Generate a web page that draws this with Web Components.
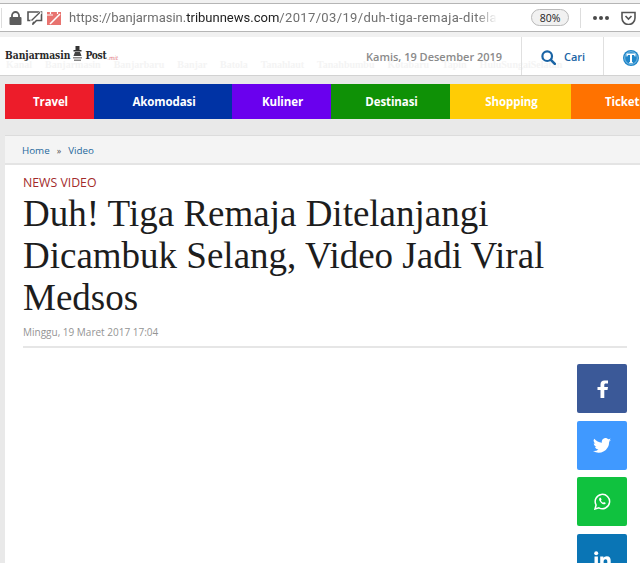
<!DOCTYPE html>
<html>
<head>
<meta charset="utf-8">
<title>Duh! Tiga Remaja Ditelanjangi</title>
<style>
    html, body { margin: 0; padding: 0; }
    body {
        width: 640px;
        height: 563px;
        overflow: hidden;
        background: #e9e9e9;
        font-family: "Open Sans", sans-serif;
    }
</style>
</head>
<body>
<browser-bar></browser-bar>
<site-header></site-header>
<nav-strip>
    <nav-item color="#ed1c2a" width="89">Travel</nav-item>
    <nav-item color="#0033a5" width="138">Akomodasi</nav-item>
    <nav-item color="#6a00ee" width="99">Kuliner</nav-item>
    <nav-item color="#0f9106" width="119">Destinasi</nav-item>
    <nav-item color="#ffcc05" width="121">Shopping</nav-item>
    <nav-item color="#ff7200" width="69" class="last">Ticketi</nav-item>
</nav-strip>
<article-card>
    <span slot="channel">NEWS VIDEO</span>
    <span slot="title">Duh! Tiga Remaja Ditelanjangi Dicambuk Selang, Video Jadi Viral Medsos</span>
    <span slot="date">Minggu, 19 Maret 2017 17:04</span>
</article-card>

<script>
class BrowserBar extends HTMLElement {
    constructor() {
        super();
        this.attachShadow({ mode: 'open' });
        this.shadowRoot.innerHTML = `
            <style>
                :host {
                    display: block;
                    height: 37px;
                    padding-top: 3px;
                    box-sizing: border-box;
                    background: #f1f1f1;
                }
                #bar {
                    height: 29px;
                    box-sizing: border-box;
                    background: #fff;
                    border-top: 1px solid #b5b5b5;
                    border-bottom: 1px solid #b5b5b5;
                    display: flex;
                    align-items: center;
                    font-family: Roboto, sans-serif;
                }
                #edge { width: 1px; height: 20px; background: #ddd; margin-left: 1px; }
                #icons { display: flex; align-items: center; gap: 5px; padding-left: 7px; }
                #bubble { margin-right: -1px; }
                #url {
                    margin-left: 8px;
                    width: 428px;
                    overflow: hidden;
                    white-space: nowrap;
                    font-size: 13px;
                    color: #6f6f6f;
                    -webkit-mask-image: linear-gradient(to right, #000 95%, transparent 100%);
                    mask-image: linear-gradient(to right, #000 95%, transparent 100%);
                }
                #url b { font-weight: 400; color: #222; }
                #url span { letter-spacing: 0.35px; }
                #zoom {
                    margin-left: 34px;
                    width: 38px;
                    height: 17px;
                    box-sizing: border-box;
                    border: 1px solid #b9b9b9;
                    border-radius: 9px;
                    background: #f1f1f1;
                    font-family: "Open Sans", sans-serif;
                    font-size: 10.5px;
                    color: #222;
                    display: flex;
                    align-items: center;
                    justify-content: center;
                }
                #sep { width: 1px; height: 20px; background: #ddd; margin-left: 11px; }
                #dots { display: flex; gap: 2px; margin-left: 12px; }
                #dots i { width: 4px; height: 4px; border-radius: 50%; background: #4a4a4a; }
                #pocket { margin-left: 12px; display: block; }
            </style>
            <div id="bar">
                <div id="edge"></div>
                <div id="icons">
                    <svg width="13" height="14" viewBox="0 0 13 14"><path d="M3 6V4.500a3.500 3.500 0 0 1 7 0V6" fill="none" stroke="#5c5c5c" stroke-width="1.800"/><rect x="0.500" y="6" width="12" height="8" rx="1" fill="#5c5c5c"/></svg>
                    <svg id="bubble" width="16" height="14" viewBox="0 0 16 14"><path d="M1 1h13.500v8.500H9.500L6 13V9.500H1z" fill="#fff" stroke="#555" stroke-width="1.600"/><path d="M4 11L14 1" stroke="#fff" stroke-width="3"/><path d="M4.500 9.500L13 1.200" stroke="#555" stroke-width="1.300"/></svg>
                    <svg width="14" height="14" viewBox="0 0 14 14"><path d="M0 1h14v13H0z" fill="#e8736f"/><path d="M3 13L13 3" stroke="#fff" stroke-width="1.600"/><path d="M0 4h6" stroke="#fff" stroke-width="1"/><path d="M3.500 0v3M10.500 0v3" stroke="#fff" stroke-width="1.200"/></svg>
                </div>
                <div id="url">https://banjarmasin.<b>tribunnews.com</b><span>/2017/03/19/duh-tiga-remaja-ditela</span></div>
                <div id="zoom">80%</div>
                <div id="sep"></div>
                <div id="dots"><i></i><i></i><i></i></div>
                <svg id="pocket" width="15" height="14" viewBox="0 0 15 14"><path d="M1 1.500h13v5.500a6.500 6.500 0 0 1-13 0z" fill="none" stroke="#555" stroke-width="1.600"/><path d="M4.500 5l3 3 3-3" fill="none" stroke="#555" stroke-width="1.600"/></svg>
            </div>
        `;
    }
}

class SiteHeader extends HTMLElement {
    constructor() {
        super();
        this.attachShadow({ mode: 'open' });
        this.shadowRoot.innerHTML = `
            <style>
                :host {
                    display: block;
                    position: relative;
                    height: 39px;
                    box-sizing: border-box;
                    background: #fff;
                    border-bottom: 1px solid #d2d2d2;
                    font-family: "Open Sans", sans-serif;
                }
                #row { display: flex; align-items: stretch; height: 38px; position: relative; }
                #logo {
                    width: 361px;
                    margin-left: 5px;
                    padding-top: 11px;
                    display: flex;
                    align-items: flex-start;
                    font-family: "DejaVu Serif Condensed", "DejaVu Serif", serif;
                    font-weight: 700;
                    font-size: 10.200px;
                    color: #2a2a2a;
                    line-height: 14px;
                    white-space: nowrap;
                    box-sizing: border-box;
                }
                #logo svg { margin: -2px 2px 0 2px; }
                #post { letter-spacing: -0.3px; }
                #logo small { font-size: 6px; color: #e0737a; font-style: italic; font-weight: 400; margin: 3px 0 0 1px; }
                #date {
                    width: 155px;
                    font-size: 11px;
                    font-weight: 600;
                    color: #8a8a8a;
                    white-space: nowrap;
                    padding-top: 12px;
                    box-sizing: border-box;
                }
                #search {
                    width: 82px;
                    border-left: 1px solid #e0e0e0;
                    box-sizing: border-box;
                    display: flex;
                    gap: 8px;
                    align-items: flex-start;
                    padding: 13px 0 0 19px;
                    color: #1a64a5;
                    font-size: 11px;
                    font-weight: 600;
                    line-height: 14px;
                }
                #tribun {
                    flex: 1;
                    border-left: 1px solid #e0e0e0;
                    padding: 12px 0 0 19px;
                    box-sizing: border-box;
                }
                #ghost {
                    position: absolute;
                    left: 6px;
                    top: 22px;
                    white-space: nowrap;
                    font-family: "Liberation Serif", serif;
                    font-weight: 700;
                    font-size: 10px;
                    color: #f4f4f4;
                    word-spacing: 10.500px;
                    width: 634px;
                    overflow: hidden;
                }
            </style>
            <div id="ghost">Kanal Banjarmasin Banjarbaru Banjar Batola Tanahlaut Tanahbumbu Kotabaru Tapin HuluSungaiSelatan</div>
            <div id="row">
                <div id="logo">Banjarmasin<svg width="11" height="16" viewBox="0 0 11 16"><path d="M3.500 0h4v4h2v1.500h-8V4h2z" fill="#333"/><path d="M3 6h5l1.500 4h-8z" fill="#444"/><path d="M1 11h9v1.500H1zM2 13.500h7V15H2z" fill="#888"/></svg><span id="post">Post</span><small>.mit</small></div>
                <div id="date">Kamis, 19 Desember 2019</div>
                <div id="search">
                    <svg width="15" height="15" viewBox="0 0 15 15"><circle cx="6.200" cy="6.200" r="4.800" fill="none" stroke="#1a64a5" stroke-width="2.200"/><path d="M9.800 9.800l4 4" stroke="#1a64a5" stroke-width="2.600" stroke-linecap="round"/></svg>
                    <span>Cari</span>
                </div>
                <div id="tribun">
                    <svg width="16" height="16" viewBox="0 0 16 16"><circle cx="8" cy="8" r="8" fill="#1f86c9"/><circle cx="8" cy="8" r="6.300" fill="none" stroke="#bfe0f4" stroke-width=".6"/><path d="M3.500 3.500h9v3h-.8l-.7-1.500H9v7l1 .6v.6H6v-.6l1-.6V5H5l-.7 1.500h-.8z" fill="#fff"/></svg>
                </div>
            </div>
        `;
    }
}

class NavStrip extends HTMLElement {
    constructor() {
        super();
        this.attachShadow({ mode: 'open' });
        this.shadowRoot.innerHTML = `
            <style>
                :host {
                    display: flex;
                    height: 35px;
                    margin: 8px 0 0 5px;
                    overflow: hidden;
                }
            </style>
            <slot></slot>
        `;
    }
}

class NavItem extends HTMLElement {
    constructor() {
        super();
        this.attachShadow({ mode: 'open' });
        this.shadowRoot.innerHTML = `
            <style>
                :host {
                    display: flex;
                    flex: none;
                    align-items: center;
                    justify-content: center;
                    height: 35px;
                    padding-left: 2px;
                    box-sizing: border-box;
                    color: #fff;
                    font-family: "Open Sans", sans-serif;
                    font-size: 11.500px;
                    font-weight: 700;
                    letter-spacing: -0.1px;
                    white-space: nowrap;
                }
                /* the strip runs off the window here, so the label starts at a fixed place */
                :host(.last) { justify-content: flex-start; padding-left: 34px; }
            </style>
            <slot></slot>
        `;
    }

    connectedCallback() {
        this.style.background = this.getAttribute('color');
        this.style.width = this.getAttribute('width') + 'px';
    }
}

class ShareButton extends HTMLElement {
    constructor() {
        super();
        this.attachShadow({ mode: 'open' });
        this.shadowRoot.innerHTML = `
            <style>
                :host {
                    display: flex;
                    flex: none;
                    width: 50px;
                    height: 49px;
                    border-radius: 2px;
                    align-items: center;
                    justify-content: center;
                }
            </style>
            <slot></slot>
        `;
    }

    connectedCallback() {
        this.style.background = this.getAttribute('color');
    }
}

class ArticleCard extends HTMLElement {
    constructor() {
        super();
        this.attachShadow({ mode: 'open' });
        this.shadowRoot.innerHTML = `
            <style>
                :host {
                    display: block;
                    margin: 16px 0 0 5px;
                    background: #fff;
                    height: 428px;
                    overflow: hidden;
                    border-top: 1px solid #dcdcdc;
                    box-sizing: border-box;
                }
                #crumbs {
                    height: 29px;
                    box-sizing: border-box;
                    background: #f4f4f4;
                    border-bottom: 2px solid #e4e4e4;
                    padding: 2px 0 0 17px;
                    display: flex;
                    align-items: center;
                    gap: 7px;
                    font-size: 9.800px;
                    color: #26689c;
                }
                #crumbs i { font-style: normal; color: #555; font-size: 9px; }
                #body { padding: 11px 13px 0 18px; }
                #channel { font-size: 12.300px; line-height: 14px; color: #a32a2a; }
                #title {
                    font-family: "Liberation Serif", serif;
                    font-weight: 400;
                    font-size: 37px;
                    line-height: 42px;
                    color: #1d1d1d;
                    margin: 3px 0 0 0;
                    width: 540px;
                }
                #date { font-size: 10px; color: #949494; margin-top: 6px; line-height: 14px; }
                hr { border: 0; height: 2px; background: #e6e6e6; margin: 7px 0 0 0; }
                #share {
                    display: flex;
                    flex-direction: column;
                    gap: 7.700px;
                    align-items: flex-end;
                    margin-top: 16px;
                }
                #fb { margin-left: 2px; }
            </style>
            <div id="crumbs"><span>Home</span><i>»</i><span>Video</span></div>
            <div id="body">
                <div id="channel"><slot name="channel"></slot></div>
                <h1 id="title"><slot name="title"></slot></h1>
                <div id="date"><slot name="date"></slot></div>
                <hr>
                <div id="share">
                    <share-button color="#3b5998"><svg id="fb" width="12" height="18" viewBox="0 0 12 18"><path d="M3.500 18V10H0.500V7h3V4.500C3.500 1.800 5 0.500 7.500 0.500H11v3H8.800C7.700 3.500 7.300 4 7.300 5V7H11l-.5 3H7.300v8z" fill="#fff"/></svg></share-button>
                    <share-button color="#4099ff"><svg width="18" height="15" viewBox="0 0 24 20"><path d="M24 2.400c-.9.400-1.800.7-2.800.8 1-.6 1.800-1.600 2.200-2.700-1 .6-2 1-3.100 1.200A4.900 4.900 0 0 0 11.900 6.200C7.800 6 4.200 4 1.700.9a4.900 4.900 0 0 0 1.500 6.600c-.8 0-1.600-.2-2.200-.6 0 2.400 1.700 4.400 3.900 4.900-.7.200-1.500.2-2.200.1.600 2 2.400 3.400 4.600 3.400A9.900 9.900 0 0 1 0 17.300 14 14 0 0 0 21.500 4.900c1-.7 1.800-1.500 2.500-2.500z" fill="#fff"/></svg></share-button>
                    <share-button color="#10c23f"><svg width="17" height="17" viewBox="0 0 17 17"><path d="M1 16l1.100-4a7.200 7.200 0 1 1 2.800 2.800z" fill="none" stroke="#fff" stroke-width="1.500"/><path d="M5.800 4.800c-.9.800-.9 2 0 3.400 1 1.600 2.300 2.700 3.800 3.100 1 .2 1.900-.3 2.200-1.300l-1.800-1-.8.800c-1-.4-1.800-1.200-2.300-2.300l.7-.8-.8-1.900z" fill="#fff"/></svg></share-button>
                    <share-button color="#0a75b5"><svg width="17" height="16" viewBox="0 0 17 16"><circle cx="2.200" cy="2.200" r="2" fill="#fff"/><path d="M.5 5.500h3.400V16H.5zM6.200 5.500h3.200V7c.6-1 1.800-1.700 3.300-1.700 3 0 4 1.900 4 4.700v6h-3.400v-5.400c0-1.400-.4-2.400-1.700-2.400-1.400 0-2 1-2 2.400V16H6.200z" fill="#fff"/></svg></share-button>
                </div>
            </div>
        `;
    }
}

customElements.define('share-button', ShareButton);
customElements.define('browser-bar', BrowserBar);
customElements.define('site-header', SiteHeader);
customElements.define('nav-strip', NavStrip);
customElements.define('nav-item', NavItem);
customElements.define('article-card', ArticleCard);
</script>
</body>
</html>
